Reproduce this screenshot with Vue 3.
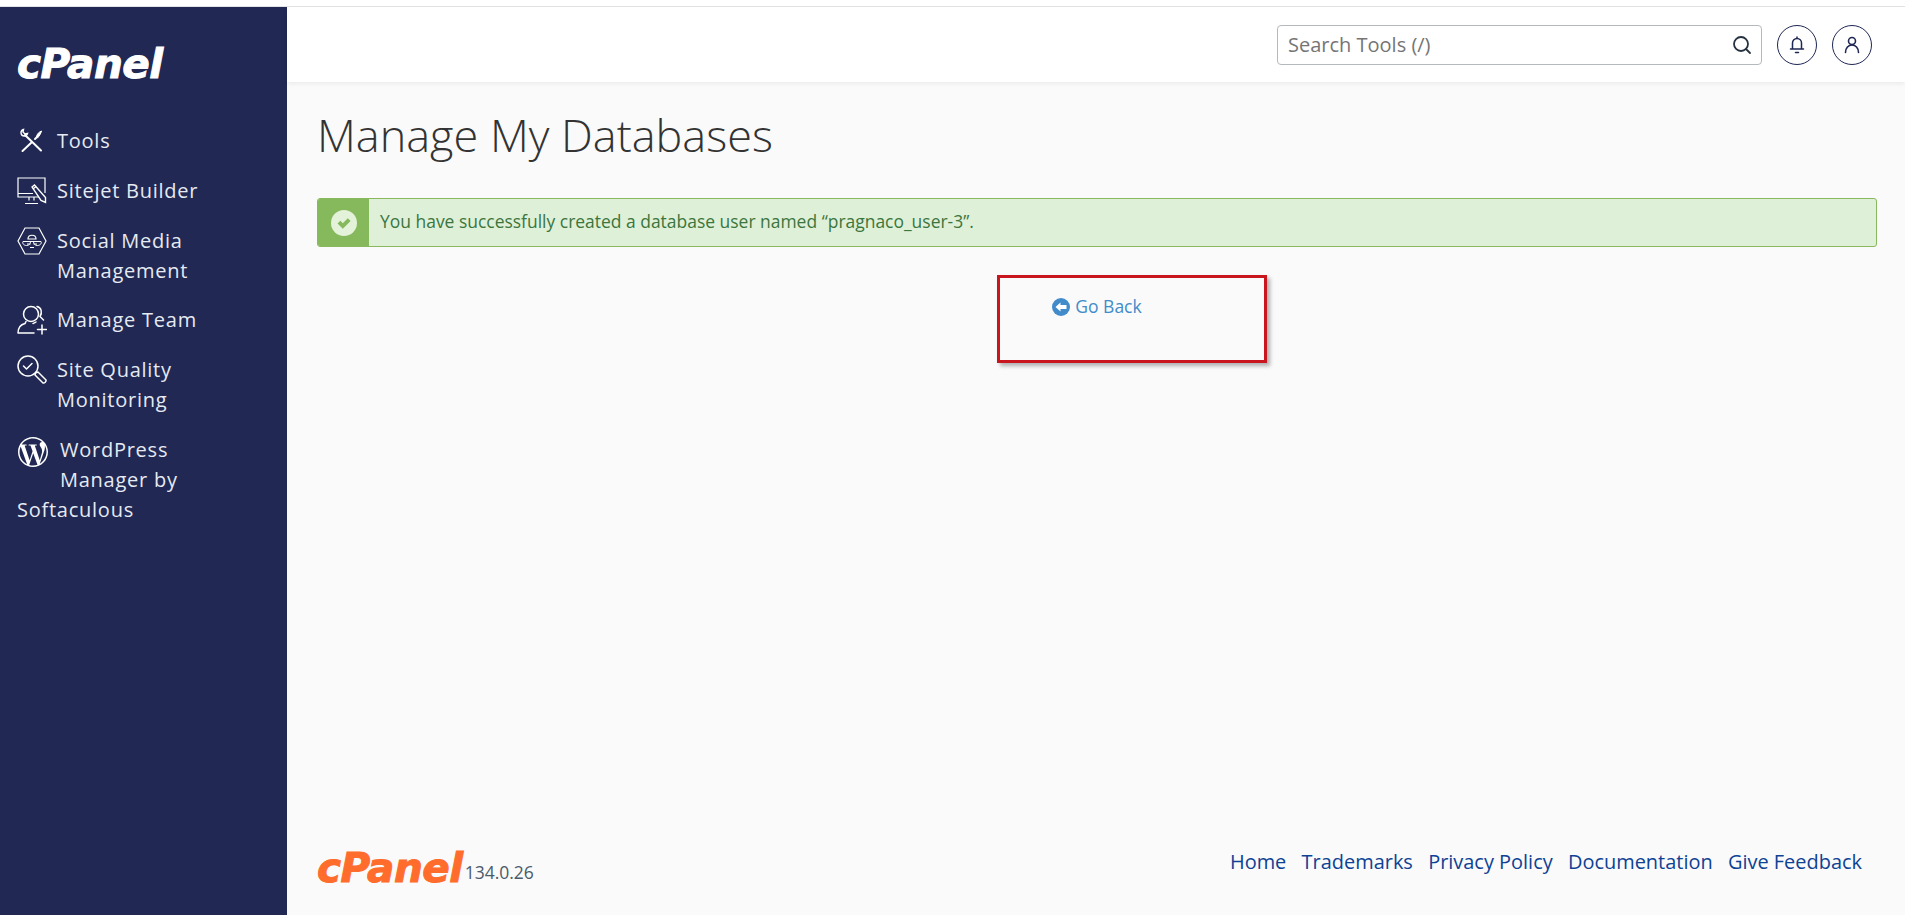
<script setup>
const footerLinks = ["Home", "Trademarks", "Privacy Policy", "Documentation", "Give Feedback"];
</script>

<template>
  <div class="page">
    <div class="top-strip"></div>
    <div class="shell">
      <aside class="sidebar">
        <div class="logo">cPanel</div>
        <nav class="menu">
          <a class="item">
            <svg class="icon" viewBox="0 0 30 30" fill="none" stroke="#fff" stroke-width="2" stroke-linecap="round">
              <path d="M8 9l16 15.500" />
              <path d="M4 6.500C4 5 5 4 6.500 3.500l-.5 2.500 2 2 2.500-.5C10 9 9 10 7.500 10 5.500 10 4 8.500 4 6.500z" stroke-width="1.400" />
              <path d="M14.500 16.500L5.500 25M18 13l2-2" />
              <path d="M19.500 10.500c.5-2.500 2.500-4.500 5-5.500-.5 2.500-2 4.500-3.500 6.500z" fill="#fff" stroke-width="1" />
            </svg>
            <span>Tools</span>
          </a>
          <a class="item">
            <svg class="icon" viewBox="0 0 30 30" fill="none" stroke="#fff" stroke-width="1.200">
              <path d="M28 17V2H1v19h21M1 17.500h15M12 21v3.500M8 27.500h13M17 21v3.500" />
              <path d="M15 11l2.500-2 11 12.500v5l-4.500-2z" stroke-width="1.400" />
              <path d="M16 13l3-2.500" />
            </svg>
            <span>Sitejet Builder</span>
          </a>
          <a class="item">
            <svg class="icon" viewBox="0 0 30 30" fill="none" stroke="#fff" stroke-width="1.200">
              <path d="M8 2h14l7 13-7 13H8L1 15z" />
              <path d="M11 13c0-5 8-5 8 0zM6 15.500h18M10 18h3.500M16.500 18H20M13 21.500h4" />
              <path d="M6 15.500c-1 2 1 4 3.500 4s4-1.500 4-4M16.500 15.500c0 2.500 1.500 4 4 4s4.500-2 3.500-4" stroke-width="1" />
            </svg>
            <span>Social Media<br />Management</span>
          </a>
          <a class="item">
            <svg class="icon" viewBox="0 0 30 30" fill="none" stroke="#fff" stroke-width="1.500" stroke-linecap="round">
              <circle cx="14" cy="9" r="7.500" />
              <path d="M20 1.500c4.500 1 5.500 6 3 10l3.500 3.500M1 28c0-5.500 3-8.500 7-9.500l1-2M1 28h16M19 17c-1.500 1-2 1-3 1.500" />
              <path d="M25 20v9M20.500 24.500h9" />
            </svg>
            <span>Manage Team</span>
          </a>
          <a class="item">
            <svg class="icon" viewBox="0 0 30 30" fill="none" stroke="#fff" stroke-width="1.500" stroke-linecap="round" stroke-linejoin="round">
              <circle cx="11" cy="11" r="10" />
              <path d="M6.500 11l3 3 5.500-5.500" />
              <path d="M18.500 18l2.500-1 8 8c.5 1.500-1.500 3.500-3 3l-8-8z" />
            </svg>
            <span>Site Quality<br />Monitoring</span>
          </a>
          <a class="item item-wrap">
            <svg class="icon-float" viewBox="0 0 24 24" fill="#fff">
              <path d="M21.469 6.825c.84 1.537 1.318 3.3 1.318 5.175 0 3.979-2.156 7.456-5.363 9.325l3.295-9.527c.615-1.54.82-2.771.82-3.864 0-.405-.026-.78-.07-1.11m-7.981.105c.647-.03 1.232-.105 1.232-.105.582-.075.514-.93-.067-.899 0 0-1.755.135-2.88.135-1.064 0-2.85-.15-2.85-.15-.585-.03-.661.855-.075.885 0 0 .54.061 1.125.09l1.68 4.605-2.37 7.08L5.354 6.9c.649-.03 1.234-.1 1.234-.1.585-.075.516-.93-.065-.896 0 0-1.746.138-2.874.138-.2 0-.438-.008-.69-.015C4.911 3.15 8.235 1.215 12 1.215c2.809 0 5.365 1.072 7.286 2.833-.046-.003-.091-.009-.141-.009-1.06 0-1.812.923-1.812 1.914 0 .89.513 1.643 1.06 2.531.411.72.89 1.643.89 2.977 0 .915-.354 1.994-.821 3.479l-1.075 3.585-3.9-11.61.001.014zM12 22.784c-1.059 0-2.081-.153-3.048-.437l3.237-9.406 3.315 9.087c.024.053.05.101.078.149-1.12.393-2.325.609-3.582.609M1.211 12c0-1.564.336-3.05.935-4.39L7.29 21.709C3.694 19.96 1.212 16.271 1.211 12M12 0C5.385 0 0 5.385 0 12s5.385 12 12 12 12-5.385 12-12S18.615 0 12 0" />
            </svg>
            WordPress Manager by Softaculous
          </a>
        </nav>
      </aside>

      <div class="main">
        <header class="topbar">
          <div class="search">
            <span class="search-text">Search Tools (/)</span>
            <svg class="search-icon" viewBox="0 0 20 20" fill="none" stroke="#26323f" stroke-width="1.800" stroke-linecap="round">
              <circle cx="9" cy="9" r="7" />
              <path d="M14 14l4 4" />
            </svg>
          </div>
          <button class="round-btn">
            <svg viewBox="0 0 20 20" fill="none" stroke="#1f2753" stroke-width="1.500" stroke-linecap="round">
              <path d="M5.500 14V8a4.500 4.500 0 0 1 9 0v6M3.500 14h13M8.500 17.500h3M10 2v1.500" />
            </svg>
          </button>
          <button class="round-btn">
            <svg viewBox="0 0 20 20" fill="none" stroke="#1f2753" stroke-width="1.600" stroke-linecap="round">
              <circle cx="10" cy="6" r="3.500" />
              <path d="M3.500 17.500c0-4.500 3-7.500 6.500-7.500s6.500 3 6.500 7.500" />
            </svg>
          </button>
        </header>

        <main class="content">
          <h1 class="title">Manage My Databases</h1>
          <div class="alert">
            <div class="alert-tab">
              <svg viewBox="0 0 26 26">
                <circle cx="13" cy="13" r="13" fill="#e3f2d9" />
                <path d="M6.500 13.500l2.800-2.800 2.500 2.500 5-5 2.800 2.800-7.800 7.800z" fill="#86b85c" />
              </svg>
            </div>
            <div class="alert-text">You have successfully created a database user named “pragnaco_user-3”.</div>
          </div>
          <div class="back-row">
            <a class="back-link">
              <svg viewBox="0 0 18 18">
                <circle cx="9" cy="9" r="9" fill="#428bca" />
                <path d="M3.500 9l5-4.500V7h6v4h-6v2.500z" fill="#fff" />
              </svg>
              Go Back
            </a>
            <div class="red-box"></div>
          </div>
        </main>

        <footer class="footer">
          <div class="footer-brand">
            <span class="footer-logo">cPanel</span>
            <span class="version">134.0.26</span>
          </div>
          <div class="footer-links">
            <a v-for="link in footerLinks" :key="link">{{ link }}</a>
          </div>
        </footer>
      </div>
    </div>
  </div>
</template>

<style>
html,
body {
  margin: 0;
  background: #fff;
}
</style>

<style scoped>
.page {
  height: 915px;
  display: flex;
  flex-direction: column;
  font-family: "Open Sans", "Liberation Sans", sans-serif;
  overflow: hidden;
}

.top-strip {
  height: 6px;
  background: #fff;
  border-bottom: 1px solid #e3e3e3;
}

.shell {
  flex: 1;
  display: flex;
  min-height: 0;
}

.sidebar {
  width: 287px;
  flex-shrink: 0;
  background: #202853;
  color: #e6eaf2;
  padding: 0 17px;
  box-sizing: border-box;
}

.logo,
.footer-logo {
  font-family: "DejaVu Sans", sans-serif;
  font-weight: 700;
  font-style: italic;
  letter-spacing: -0.5px;
  line-height: 1;
  -webkit-text-stroke: 1px currentColor;
}

.logo {
  color: #fff;
  font-size: 40.500px;
  margin-top: 37px;
  height: 40px;
}

.menu {
  margin-top: 42px;
  display: flex;
  flex-direction: column;
  gap: 19.800px;
}

.item {
  display: flex;
  align-items: flex-start;
  font-size: 20px;
  line-height: 30px;
  letter-spacing: 0.750px;
}

.icon {
  width: 30px;
  height: 30px;
  margin-right: 10px;
  flex-shrink: 0;
}

.item-wrap {
  display: block;
  width: 190px;
}

.icon-float {
  float: left;
  width: 30px;
  height: 30px;
  margin: 2px 12px 2px 1px;
}

.main {
  flex: 1;
  display: flex;
  flex-direction: column;
  background: #fafafa;
  min-width: 0;
}

.topbar {
  height: 75px;
  flex-shrink: 0;
  background: #fff;
  box-shadow: 0 2px 4px rgba(0, 0, 0, 0.06);
  display: flex;
  align-items: center;
  justify-content: flex-end;
  gap: 15px;
  padding: 0 33px 0 0;
  box-sizing: border-box;
  position: relative;
}

.search {
  width: 485px;
  height: 40px;
  box-sizing: border-box;
  border: 1px solid #b5b8bd;
  border-radius: 4px;
  display: flex;
  align-items: center;
  justify-content: space-between;
  padding: 0 9px 0 10px;
}

.search-text {
  font-size: 20px;
  color: #757575;
}

.search-icon {
  width: 20px;
  height: 20px;
}

.round-btn {
  width: 40px;
  height: 40px;
  border-radius: 50%;
  border: 1px solid #1f2753;
  background: #fff;
  padding: 9px;
  box-sizing: border-box;
}

.round-btn svg {
  display: block;
  width: 100%;
  height: 100%;
}

.content {
  flex: 1;
  padding: 0 28px 0 30px;
}

.title {
  font-size: 45px;
  font-weight: 300;
  line-height: 62px;
  margin: 22px 0 32px;
  color: #333;
}

.alert {
  height: 49px;
  box-sizing: border-box;
  display: flex;
  background: #dff0d8;
  border: 1px solid #8ab85f;
  border-radius: 3px;
  overflow: hidden;
}

.alert-tab {
  width: 51px;
  background: #86b85c;
  display: flex;
  align-items: center;
  justify-content: center;
}

.alert-tab svg {
  width: 26px;
  height: 26px;
}

.alert-text {
  padding-left: 11px;
  font-size: 17.470px;
  line-height: 45px;
  color: #3c763d;
}

.back-row {
  position: relative;
  text-align: center;
  padding-top: 47px;
}

.back-link {
  font-size: 17.500px;
  line-height: 25px;
  color: #428bca;
  display: inline-flex;
  align-items: center;
  gap: 5px;
}

.back-link svg {
  width: 18px;
  height: 18px;
}

.red-box {
  position: absolute;
  left: 680px;
  top: 28px;
  width: 270px;
  height: 88px;
  box-sizing: border-box;
  border: 3px solid #c9151e;
  box-shadow: 3px 3px 4px rgba(0, 0, 0, 0.3);
}

.footer {
  height: 70px;
  flex-shrink: 0;
  display: flex;
  justify-content: space-between;
  padding: 0 43px 0 30px;
}

.footer-brand {
  display: flex;
  align-items: flex-end;
  height: 43px;
}

.footer-logo {
  font-size: 40.500px;
  color: #ff6c2c;
  line-height: 40px;
}

.version {
  font-size: 17.500px;
  color: #4b5b6b;
  line-height: 24px;
  margin: 0 0 4px 2px;
}

.footer-links {
  display: flex;
  gap: 15.300px;
  font-size: 19.950px;
  color: #0d4294;
  line-height: 28px;
  padding-top: 3px;
  height: 28px;
}
</style>
